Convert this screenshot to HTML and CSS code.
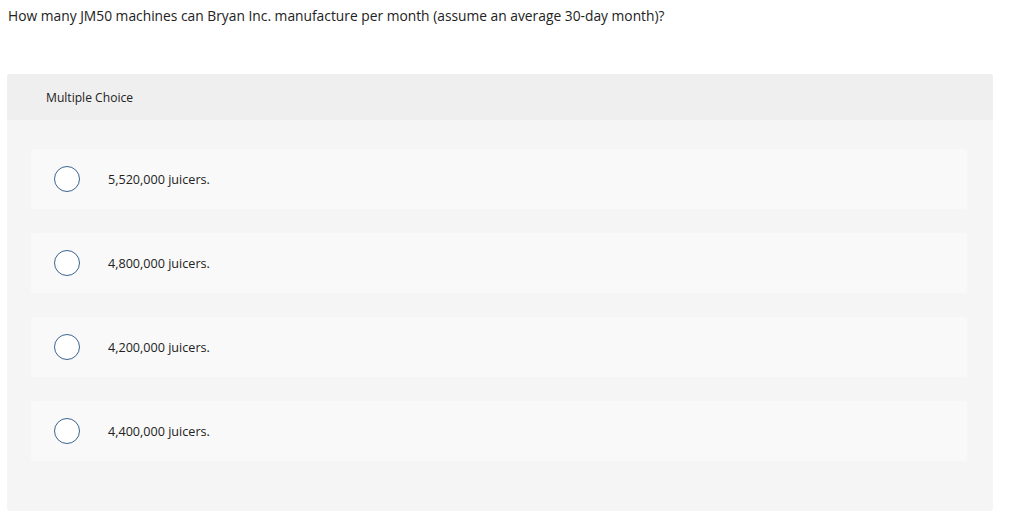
FILE: index.html
```html
<!DOCTYPE html>
<html>
<head>
<meta charset="utf-8">
<link rel="stylesheet" href="styles.css">
</head>
<body>
<p class="question">How many JM50 machines can Bryan Inc. manufacture per month (assume an average 30-day month)?</p>
<div class="mc">
  <div class="mc-header">Multiple Choice</div>
  <div class="mc-body">
    <div class="choice"><span class="radio"></span><span class="label">5,520,000 juicers.</span></div>
    <div class="choice"><span class="radio"></span><span class="label">4,800,000 juicers.</span></div>
    <div class="choice"><span class="radio"></span><span class="label">4,200,000 juicers.</span></div>
    <div class="choice"><span class="radio"></span><span class="label">4,400,000 juicers.</span></div>
  </div>
</div>
</body>
</html>
```
FILE: styles.css
```css
html, body {
  margin: 0;
  padding: 0;
  background: #ffffff;
}
body {
  font-family: "Open Sans", "Liberation Sans", sans-serif;
  color: #222222;
}
.question {
  margin: 0;
  padding: 7px 0 0 8px;
  font-size: 13.8px;
  line-height: 17px;
}
.mc {
  margin: 50px 0 0 7px;
  width: 986px;
  border-radius: 3px;
  overflow: hidden;
  background: #f5f5f5;
}
.mc-header {
  height: 46px;
  display: flex;
  align-items: center;
  padding-left: 39px;
  background: #efefef;
  font-size: 12.1px;
  color: #222;
}
.mc-body {
  padding: 29px 26px 50px 24px;
  display: flex;
  flex-direction: column;
  gap: 24px;
}
.choice {
  height: 60px;
  background: #f9f9f9;
  border-radius: 3px;
  display: flex;
  align-items: center;
  padding-left: 23px;
}
.radio {
  width: 24px;
  height: 24px;
  border: 1px solid #3b6491;
  border-radius: 50%;
  background: #fff;
  flex: none;
}
.label {
  margin-left: 28px;
  font-size: 12.6px;
  color: #222;
}
```
